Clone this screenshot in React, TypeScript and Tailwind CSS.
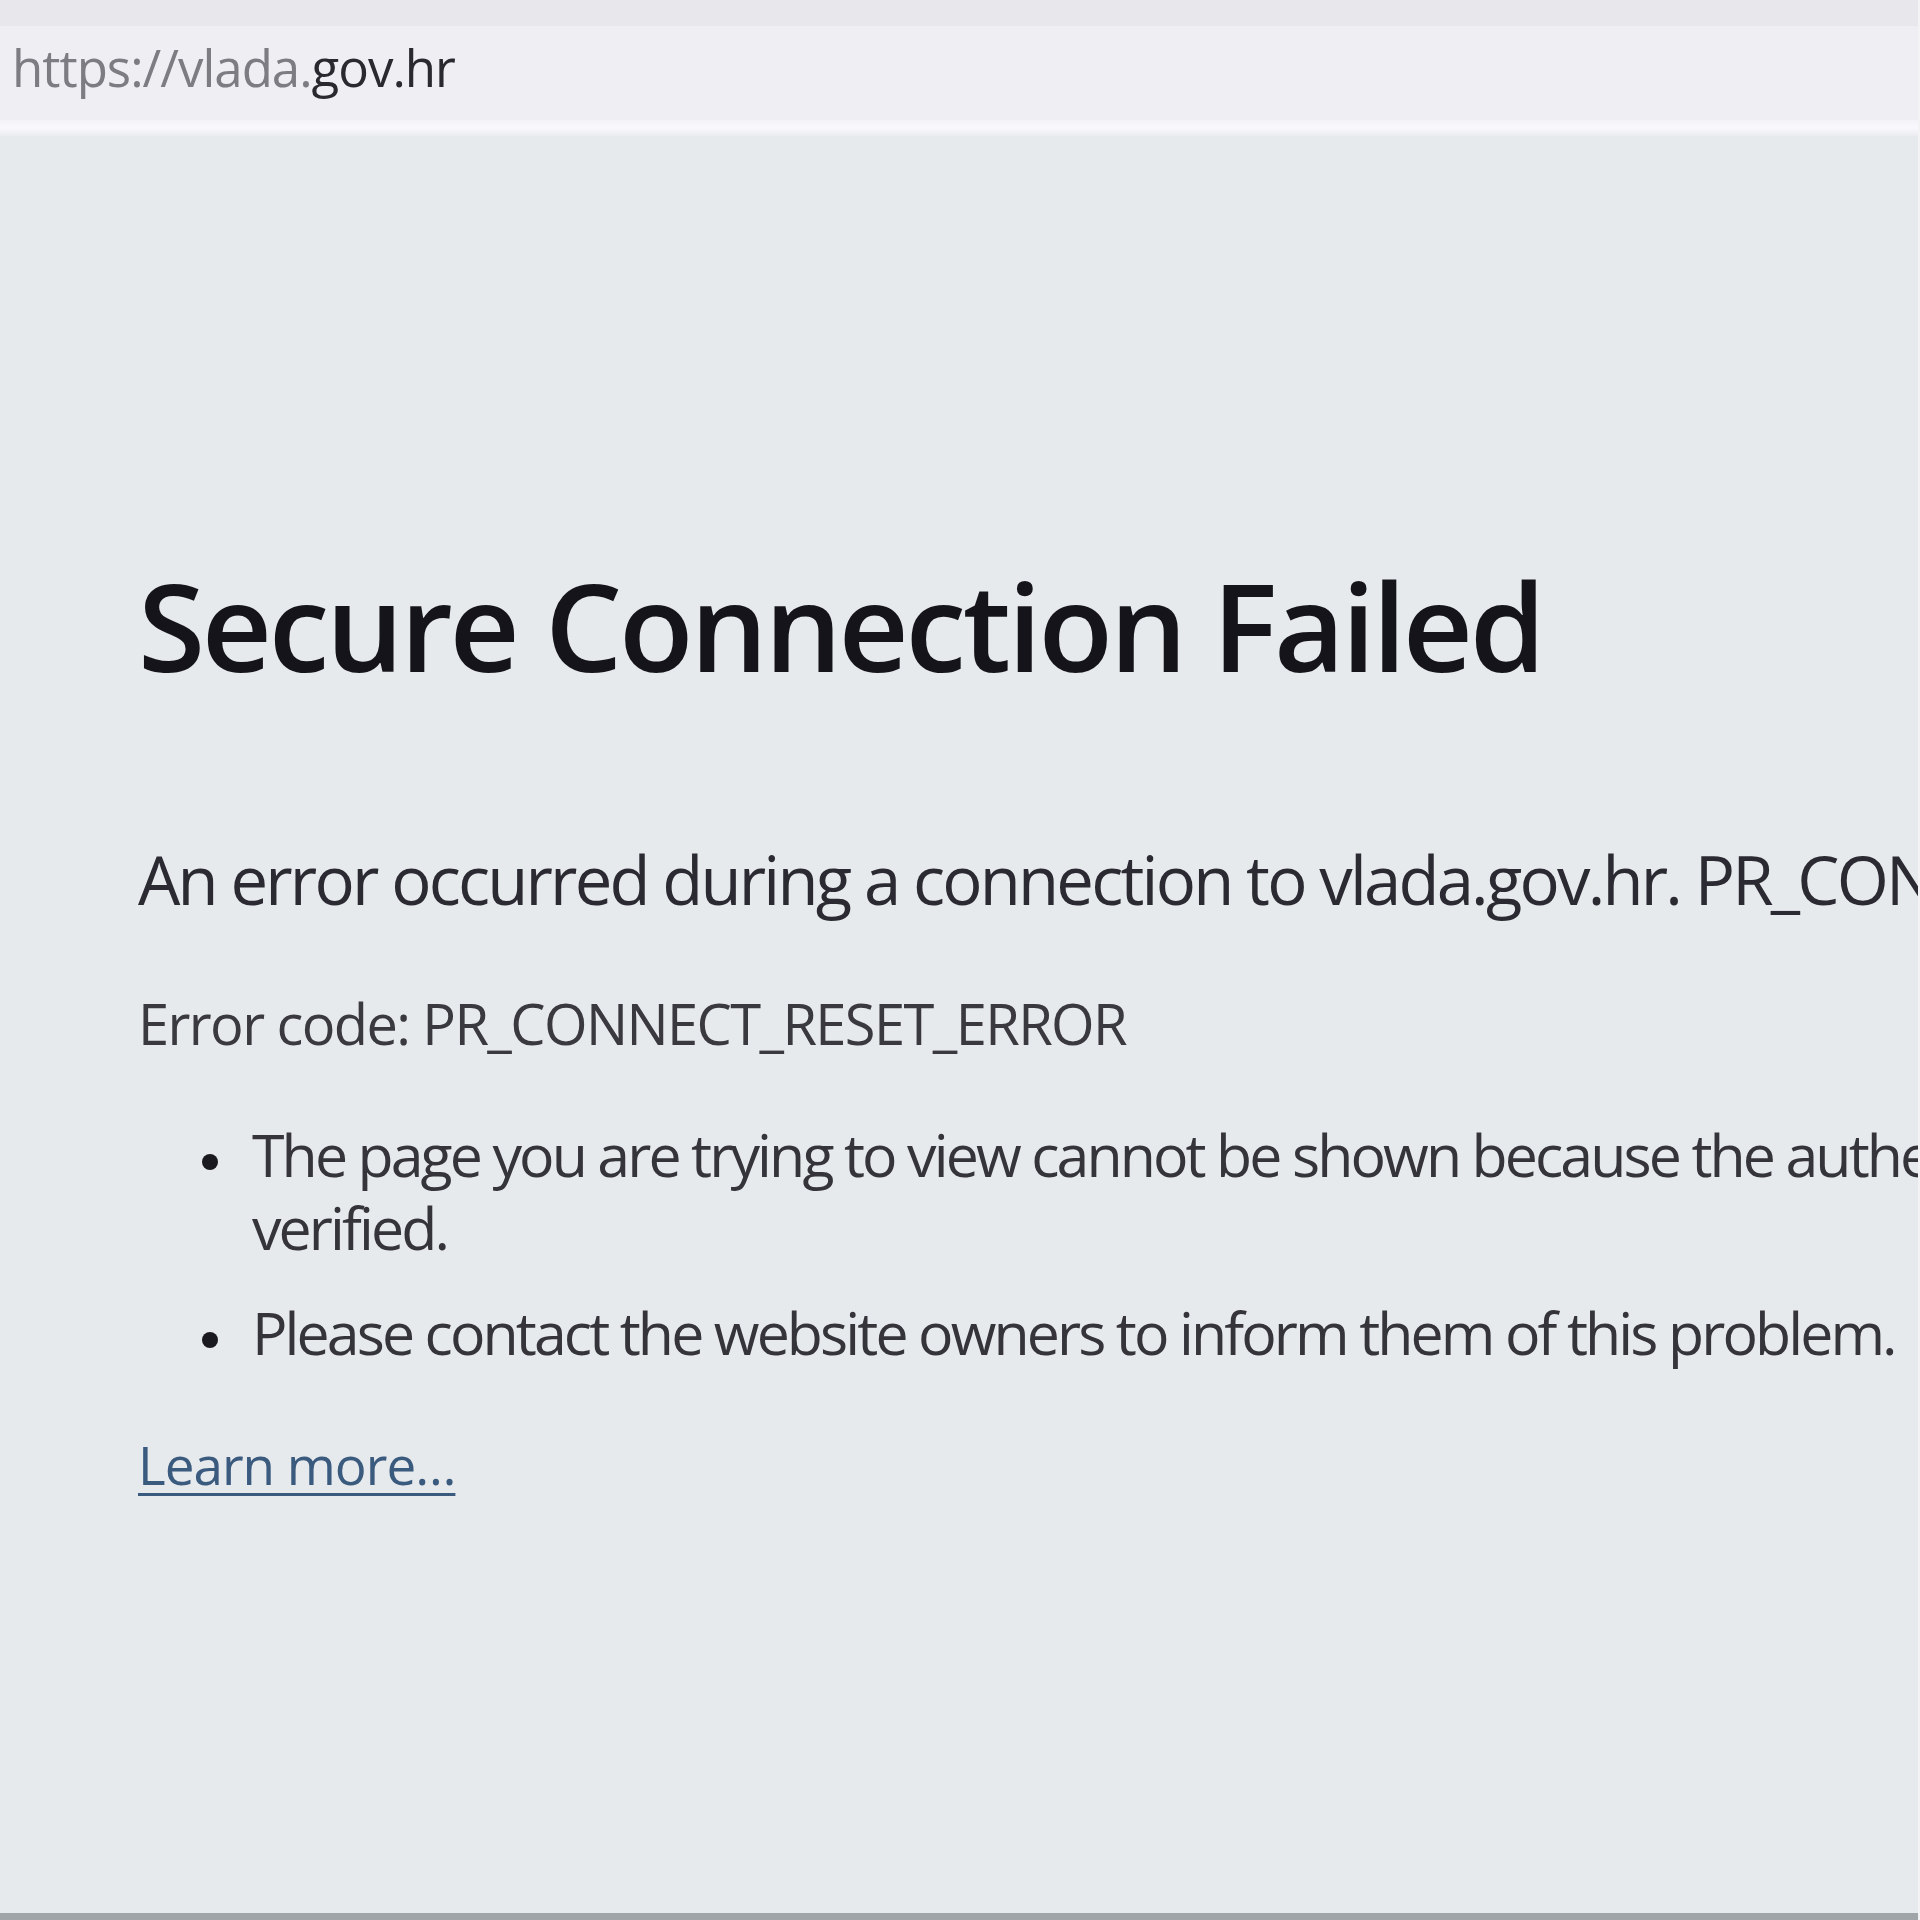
export default function App() {
  return (
    <div className="w-[1920px] h-[1920px] overflow-hidden flex flex-col bg-[#e7eaed] font-['Open_Sans',sans-serif] border-r-2 border-[#f3f3f6]">
      {/* Browser chrome */}
      <div className="h-[26px] bg-[#e8e7ec]" />
      <div className="h-[94px] bg-[#efeef3] px-[12px] pt-[11px]">
        <div className="text-[51px] leading-[60px] tracking-[-1px] whitespace-nowrap">
          <span className="text-[#7d7c83]">https://vlada.</span>
          <span className="text-[#2a2930]">gov.hr</span>
        </div>
      </div>
      <div className="h-[16px] bg-gradient-to-b from-[#f4f3f8] via-[#f9f8fd] to-[#ebecef]" />

      {/* Error page */}
      <main className="flex-1 pl-[138px] pt-[414px] whitespace-nowrap">
        <h1 className="text-[122px] leading-[150px] font-semibold tracking-[-3.3px] text-[#15141a]">
          Secure Connection Failed
        </h1>

        <p className="mt-[139px] text-[67px] leading-[80px] tracking-[-2.8px] text-[#2b2a33]">
          An error occurred during a connection to vlada.gov.hr. PR_CONNECT_RESET_ERROR
        </p>

        <p className="mt-[69px] text-[56px] leading-[70px] tracking-[-1.6px] text-[#3a3940]">
          Error code: PR_CONNECT_RESET_ERROR
        </p>

        <ul className="mt-[60px] text-[59px] leading-[73px] tracking-[-2.9px] text-[#35343b]">
          <Bullet>
            The page you are trying to view cannot be shown because the authenticity of the received data could not be
            <br />
            verified.
          </Bullet>
          <Bullet className="mt-[32px]">
            Please contact the website owners to inform them of this problem.
          </Bullet>
        </ul>

        <a
          href="#"
          className="block mt-[63px] w-fit text-[53px] leading-[66px] tracking-[-1px] text-[#3a5a7e] underline decoration-[3px] underline-offset-[8px]"
        >
          Learn more…
        </a>
      </main>

      <div className="h-[7px] bg-[#a0a5a8]" />
    </div>
  );
}

function Bullet({
  children,
  className = "",
}: {
  children: React.ReactNode;
  className?: string;
}) {
  return (
    <li className={"flex " + className}>
      <span className="w-[114px] shrink-0 flex justify-end pr-[34px]">
        <span className="mt-[36px] w-[16px] h-[16px] rounded-full bg-[#1a191f]" />
      </span>
      <span>{children}</span>
    </li>
  );
}
